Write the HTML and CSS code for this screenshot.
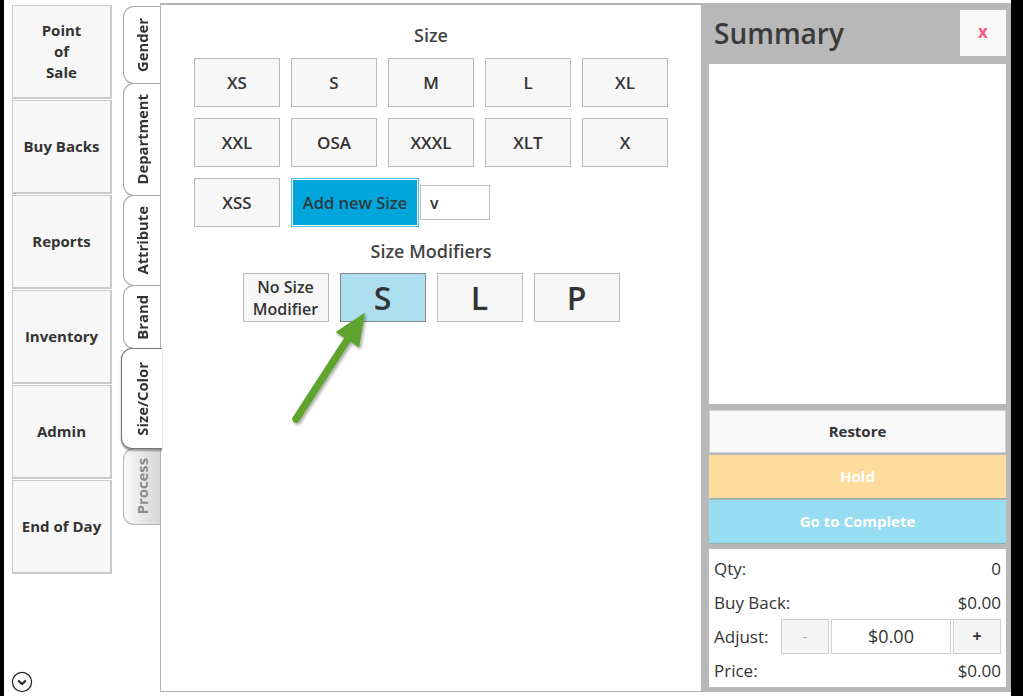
FILE: index.html
```html
<!doctype html>
<html lang="en">
<head>
	<meta charset="UTF-8">
	<title>Buy Backs - Size</title>
	<link rel="stylesheet" href="styles.css">
</head>
<body>
<div class="app">
	<div class="nav">
		<a href="javascript:;" class="navBtn">Point<br>of<br>Sale</a>
		<a href="javascript:;" class="navBtn">Buy Backs</a>
		<a href="javascript:;" class="navBtn">Reports</a>
		<a href="javascript:;" class="navBtn">Inventory</a>
		<a href="javascript:;" class="navBtn">Admin</a>
		<a href="javascript:;" class="navBtn">End of Day</a>
		<span class="more">
			<svg width="22" height="22" viewBox="0 0 22 22"><circle cx="11" cy="11" r="9.6" fill="none" stroke="#222" stroke-width="1.2"/><path d="M7.2 9.4 L11 13 L14.8 9.4" fill="none" stroke="#222" stroke-width="2"/></svg>
		</span>
	</div>

	<div class="tabs">
		<div class="tab t-gender"><span>Gender</span></div>
		<div class="tab t-dept"><span>Department</span></div>
		<div class="tab t-attr"><span>Attribute</span></div>
		<div class="tab t-brand"><span>Brand</span></div>
		<div class="tab t-size active"><span>Size/Color</span></div>
		<div class="tab t-process off"><span>Process</span></div>
	</div>

	<div class="main">
		<h2 class="title">Size</h2>
		<div class="sizeGrid">
			<a href="javascript:;" class="btn">XS</a>
			<a href="javascript:;" class="btn">S</a>
			<a href="javascript:;" class="btn">M</a>
			<a href="javascript:;" class="btn">L</a>
			<a href="javascript:;" class="btn">XL</a>
			<a href="javascript:;" class="btn">XXL</a>
			<a href="javascript:;" class="btn">OSA</a>
			<a href="javascript:;" class="btn">XXXL</a>
			<a href="javascript:;" class="btn">XLT</a>
			<a href="javascript:;" class="btn">X</a>
			<a href="javascript:;" class="btn">XSS</a>
			<div class="addRow">
				<a href="javascript:;" class="addBtn">Add new Size</a>
				<input class="addInput" type="text" value="v">
			</div>
		</div>

		<h2 class="title title2">Size Modifiers</h2>
		<div class="modRow">
			<a href="javascript:;" class="btn small">No Size<br>Modifier</a>
			<a href="javascript:;" class="btn big sel">S</a>
			<a href="javascript:;" class="btn big">L</a>
			<a href="javascript:;" class="btn big">P</a>
		</div>

		<svg class="arrow" width="100" height="130" viewBox="0 0 100 130">
			<defs>
				<filter id="sh" x="-30%" y="-30%" width="160%" height="160%">
					<feDropShadow dx="1.5" dy="2" stdDeviation="1.5" flood-color="#000" flood-opacity="0.35"/>
				</filter>
			</defs>
			<g filter="url(#sh)">
				<line x1="15" y1="117" x2="66.7" y2="37.2" stroke="#5ea42e" stroke-width="7.5" stroke-linecap="round"/>
				<path d="M55.8 30.1 L83 12 L77.6 44.3 Z" fill="#5ea42e" stroke="#5ea42e" stroke-width="1.5" stroke-linejoin="round"/>
			</g>
		</svg>
	</div>

	<div class="summary">
		<div class="sumHead">
			<span class="sumTitle">Summary</span>
			<a href="javascript:;" class="closeBtn">x</a>
		</div>
		<div class="sumList"></div>
		<a href="javascript:;" class="act restore">Restore</a>
		<a href="javascript:;" class="act hold">Hold</a>
		<a href="javascript:;" class="act complete">Go to Complete</a>
		<div class="totals">
			<div class="row"><span>Qty:</span><span>0</span></div>
			<div class="row"><span>Buy Back:</span><span>$0.00</span></div>
			<div class="row">
				<span>Adjust:</span>
				<div class="adjust">
					<a href="javascript:;" class="adjBtn minus">-</a>
					<span class="adjVal">$0.00</span>
					<a href="javascript:;" class="adjBtn plus">+</a>
				</div>
			</div>
			<div class="row"><span>Price:</span><span>$0.00</span></div>
		</div>
	</div>
</div>
</body>
</html>
```

FILE: styles.css
```css
*{margin:0; padding:0; box-sizing:border-box;}
a{text-decoration:none; color:inherit;}

body{
	background:#fff;
	overflow:hidden;
	font-family:"Open Sans", "Noto Sans", Arial, sans-serif;
	color:#353535;
}

.app{
	display:flex;
	height:696px;
	border-left:4px solid #000;
	border-right:12px solid #000;
}

/* left menu */
.nav{
	width:117px;
	padding:5px 0 0 8px;
	display:flex;
	flex-direction:column;
}
.navBtn{
	width:100px;
	height:94px;
	margin-bottom:1px;
	background:#f7f7f7;
	border:1px solid #c9c9c9;
	border-width:1px 2px 2px 1px;
	display:flex;
	align-items:center;
	justify-content:center;
	text-align:center;
	font-size:15px;
	font-weight:700;
	line-height:21px;
	color:#333;
}
.more{
	margin-top:auto;
	margin-bottom:3px;
	width:22px;
	height:22px;
	margin-left:-1px;
}

/* vertical tabs */
.tabs{
	width:39px;
	padding-top:6px;
	display:flex;
	flex-direction:column;
	align-items:flex-end;
}
.tab{
	width:37px;
	background:#fff;
	border:1px solid #a9a9a9;
	border-right:none;
	border-radius:11px 0 0 11px;
	display:flex;
	align-items:center;
	justify-content:center;
	margin-bottom:-1px;
	font-size:14.8px;
	font-weight:700;
	color:#333;
}
.tab span{
	writing-mode:vertical-rl;
	transform:rotate(180deg);
}
.t-gender{height:78px;}
.t-dept{height:113px;}
.t-attr{height:91px;}
.t-brand{height:64px;}
.t-size{height:101px;}
.t-process{height:77px;}
.tab.active{
	width:41px;
	margin-right:-2px;
	position:relative;
	z-index:2;
	border-color:#777;
	box-shadow:0 2px 2px rgba(0,0,0,0.35);
}
.tab.off{
	background:linear-gradient(to right, #fafafa, #d6d6d6);
	color:#8a8a8a;
	border-color:#b5b5b5;
}

/* main panel */
.main{
	position:relative;
	width:542px;
	height:689px;
	margin-top:3px;
	border:1px solid #b3b3b3;
	border-top-width:2px;
	display:flex;
	flex-direction:column;
	align-items:center;
}
.title{
	margin-top:18px;
	font-size:18px;
	font-weight:600;
	line-height:24px;
	color:#444;
}
.title2{margin-top:12px;}
.sizeGrid{
	margin-top:11px;
	display:grid;
	grid-template-columns:repeat(5, 86px);
	grid-auto-rows:49px;
	gap:11px;
}
.btn{
	background:#f7f7f7;
	border:1px solid #b9b9b9;
	display:flex;
	align-items:center;
	justify-content:center;
	text-align:center;
	font-size:17px;
	font-weight:600;
	color:#333;
}
.addRow{
	grid-column:span 3;
	display:flex;
	align-items:center;
}
.addBtn{
	width:128px;
	height:49px;
	background:#00a6db;
	border:1px solid #45c1ec;
	box-shadow:inset 0 0 0 1px #fff;
	display:flex;
	align-items:center;
	justify-content:center;
	font-size:16.5px;
	font-weight:600;
	color:#2b3a40;
}
.addInput{
	width:70px;
	height:35px;
	margin-left:1px;
	border:1px solid #bdbdbd;
	padding-left:9px;
	font-family:inherit;
	font-size:16px;
	font-weight:600;
	color:#333;
	outline:none;
}
.modRow{
	margin-top:10px;
	display:flex;
	gap:11px;
}
.modRow .btn{
	width:86px;
	height:49px;
}
.btn.small{
	font-size:16px;
	line-height:22px;
}
.btn.big{
	font-size:32px;
	font-weight:600;
	color:#333;
}
.btn.sel{
	background:#addff0;
	border-color:#878787;
}
.arrow{
	position:absolute;
	left:120px;
	top:297px;
}

/* summary */
.summary{
	width:309px;
	height:689px;
	margin-top:3px;
	background:#b8b8b8;
	padding:7px 5px 4px 7px;
	display:flex;
	flex-direction:column;
}
.sumHead{
	height:46px;
	display:flex;
	align-items:center;
	justify-content:space-between;
	margin-bottom:8px;
}
.sumTitle{
	padding-left:5px;
	font-size:28px;
	font-weight:600;
	color:#3a3a3a;
}
.closeBtn{
	width:46px;
	height:46px;
	background:#f8f8f8;
	display:flex;
	align-items:center;
	justify-content:center;
	font-size:17px;
	font-weight:700;
	color:#f55a85;
	padding-bottom:3px;
}
.sumList{
	height:340px;
	background:#fff;
	margin-bottom:6px;
}
.act{
	height:44px;
	display:flex;
	align-items:center;
	justify-content:center;
	font-size:15px;
	font-weight:700;
	color:#fff;
	margin-bottom:1px;
	padding-bottom:2px;
}
.restore{
	background:#f8f8f8;
	border:1px solid #d2d2d2;
	color:#333;
	height:43px;
	margin-bottom:2px;
}
.hold{
	background:#fddc9d;
	border-bottom:1px solid #8fb0aa;
}
.complete{
	background:#97dcf0;
	border-bottom:1px solid #8fb0aa;
	margin-bottom:5px;
}
.totals{
	height:138px;
	background:#fff;
	padding:2px 5px 0 5px;
	font-size:17px;
	color:#333;
}
.row{
	height:34px;
	display:flex;
	align-items:center;
	justify-content:space-between;
}
.adjust{
	display:flex;
	gap:2px;
}
.adjBtn{
	width:48px;
	height:35px;
	background:#f5f5f5;
	border:1px solid #cfcfcf;
	display:flex;
	align-items:center;
	justify-content:center;
	font-size:16px;
}
.minus{color:#aaa;}
.plus{font-weight:700; color:#333;}
.adjVal{
	width:120px;
	height:35px;
	border:1px solid #cfcfcf;
	display:flex;
	align-items:center;
	justify-content:center;
	font-size:18px;
}
```
